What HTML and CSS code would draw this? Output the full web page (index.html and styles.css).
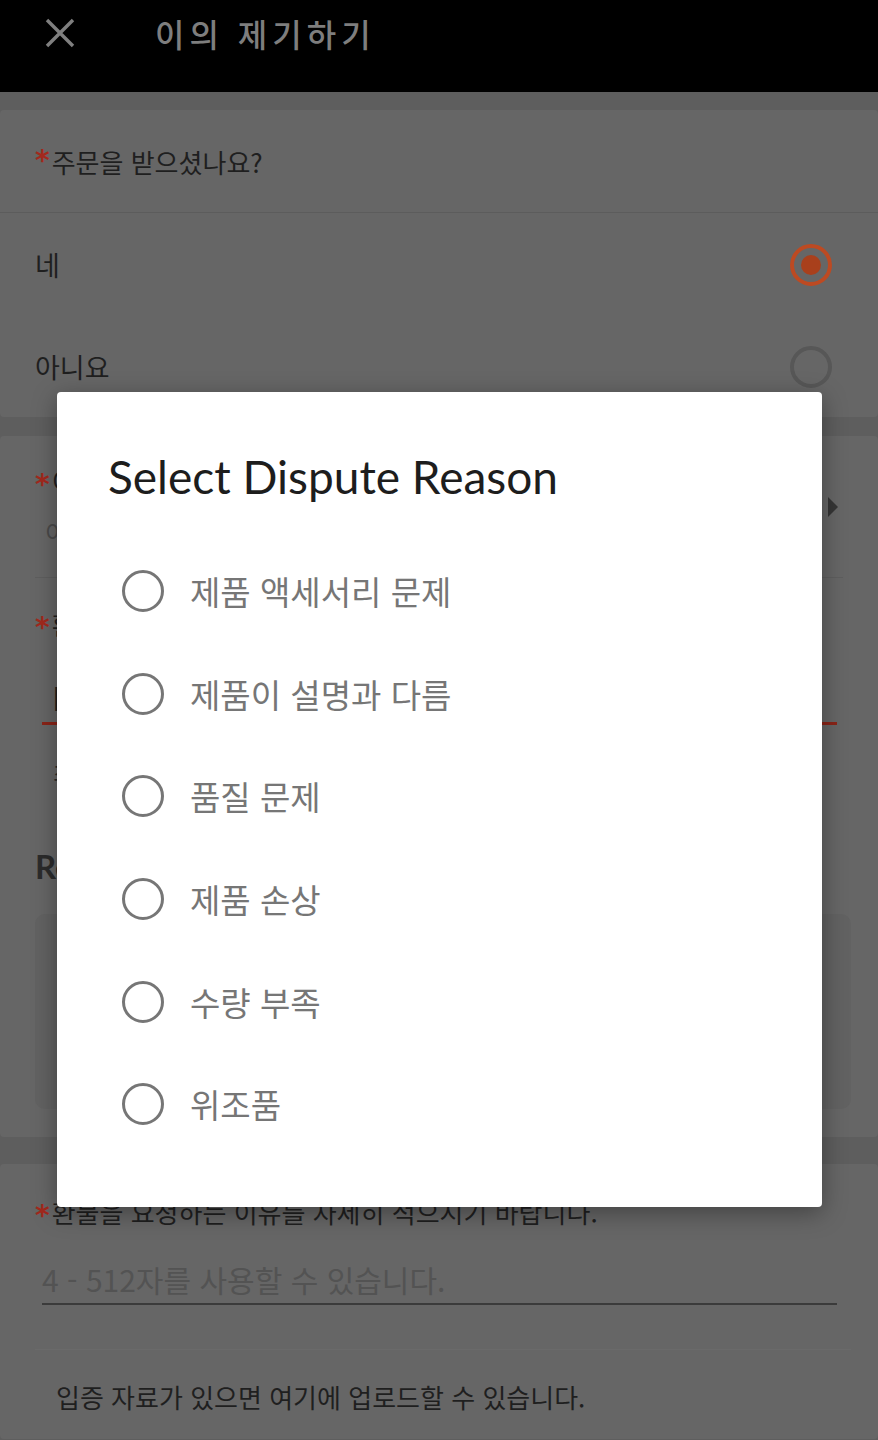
FILE: index.html
```html
<!DOCTYPE html>
<html lang="ko">
<head>
<meta charset="utf-8">
<title>이의 제기하기</title>
<link rel="stylesheet" href="styles.css">
</head>
<body>
<header class="topbar">
  <svg class="close-icon" width="30" height="30" viewBox="0 0 30 30" aria-hidden="true">
    <path d="M2 2 L28 28 M28 2 L2 28" stroke="#7f7f7f" stroke-width="3.4" stroke-linecap="butt" fill="none"/>
  </svg>
  <h1 class="topbar-title">이의 제기하기</h1>
</header>

<main class="page">
  <section class="card">
    <div class="row row-question"><span class="req">*</span>주문을 받으셨나요?</div>
    <div class="row row-option">
      <span>네</span>
      <span class="bg-radio bg-radio-on"></span>
    </div>
    <div class="row row-option row-last">
      <span>아니요</span>
      <span class="bg-radio"></span>
    </div>
  </section>

  <section class="card card-reason">
    <div class="select-block">
      <div class="select-text">
        <div class="field-label"><span class="req">*</span>이의 제기 사유</div>
        <div class="hint">이유를 선택해 주세요</div>
      </div>
      <span class="caret"></span>
    </div>
    <div class="amount-block">
      <div class="field-label"><span class="req">*</span>환불 금액</div>
      <div class="amount-input">KRW 12,000</div>
      <div class="amount-note">최대 환불 가능 금액: KRW 12,000</div>
    </div>
    <h2 class="section-title">Refund Details</h2>
    <div class="detail-box"></div>
  </section>

  <section class="card card-desc">
    <div class="field-label"><span class="req">*</span>환불을 요청하는 이유를 자세히 적으시기 바랍니다.</div>
    <div class="desc-input">4 - 512자를 사용할 수 있습니다.</div>
    <div class="upload-text">입증 자료가 있으면 여기에 업로드할 수 있습니다.</div>
  </section>
</main>

<div class="dialog" role="dialog" aria-label="Select Dispute Reason">
  <h2 class="dialog-title">Select Dispute Reason</h2>
  <ul class="reason-list">
    <li class="reason"><span class="radio"></span>제품 액세서리 문제</li>
    <li class="reason"><span class="radio"></span>제품이 설명과 다름</li>
    <li class="reason"><span class="radio"></span>품질 문제</li>
    <li class="reason"><span class="radio"></span>제품 손상</li>
    <li class="reason"><span class="radio"></span>수량 부족</li>
    <li class="reason"><span class="radio"></span>위조품</li>
  </ul>
</div>
</body>
</html>
```

FILE: styles.css
```css
* { box-sizing: border-box; }

html, body {
  margin: 0;
  padding: 0;
}

body {
  width: 878px;
  height: 1440px;
  overflow: hidden;
  background: #5e5e5e;
  font-family: "Noto Sans CJK KR", "Noto Sans", sans-serif;
  color: #1f1f1f;
  position: relative;
}

/* ---------- top bar ---------- */
.topbar {
  height: 92px;
  background: #000;
  display: flex;
  align-items: center;
  padding: 0 0 26px 45px;
}

.close-icon {
  display: block;
  flex: none;
}

.topbar-title {
  margin: 0 0 0 80px;
  font-size: 32px;
  line-height: 32px;
  font-weight: 500;
  letter-spacing: 5px;
  color: #7e7e7e;
}

/* ---------- page behind the dialog ---------- */
.page {
  display: flex;
  flex-direction: column;
  padding-top: 18px;
}

.card {
  background: #666;
  border-radius: 4px;
  overflow: hidden;
}

.card + .card {
  margin-top: 19px;
}

.req {
  display: inline-block;
  color: #a2291d;
  font-family: "DejaVu Sans", sans-serif;
  font-weight: 700;
  font-size: 28px;
  line-height: 20px;
  margin-right: 2px;
  vertical-align: -2px;
}

.row {
  display: flex;
  align-items: center;
  padding: 0 46px 0 35px;
  font-size: 27px;
}

.row-question {
  height: 103px;
  font-size: 26px;
  border-bottom: 1px solid #5c5c5c;
}

.row-option {
  height: 103px;
  justify-content: space-between;
}

.row-last {
  height: 101px;
}

.bg-radio {
  width: 42px;
  height: 42px;
  border-radius: 50%;
  border: 4px solid #575757;
  display: flex;
  align-items: center;
  justify-content: center;
}

.bg-radio-on {
  border-color: #bd4a22;
}

.bg-radio-on::after {
  content: "";
  width: 20px;
  height: 20px;
  border-radius: 50%;
  background: #a9401c;
}

/* card 2 */
.card-reason {
  padding: 0 35px 25px 35px;
  height: 701px;
}

.select-block {
  display: flex;
  align-items: center;
  justify-content: space-between;
  height: 142px;
  border-bottom: 1px solid #5e5e5e;
  padding-right: 5px;
}

.field-label {
  font-size: 26px;
  line-height: 30px;
}

.hint {
  margin-top: 21px;
  padding-left: 10px;
  font-size: 24px;
  line-height: 30px;
  color: #4a4a4a;
}

.caret {
  width: 0;
  height: 0;
  border-top: 10px solid transparent;
  border-bottom: 10px solid transparent;
  border-left: 10px solid #353535;
}

.amount-block {
  padding-top: 31px;
}

.amount-input {
  margin: 38px 6px 0 7px;
  padding: 0 10px 5px 10px;
  font-size: 32px;
  line-height: 40px;
  color: #1f1f1f;
  border-bottom: 3px solid #8a2418;
}

.amount-note {
  margin-top: 33px;
  padding-left: 18px;
  font-size: 24px;
  line-height: 30px;
  color: #2a2a2a;
}

.section-title {
  margin: 58px 0 0 0;
  font-family: "Lato", "Liberation Sans", sans-serif;
  font-size: 33px;
  line-height: 40px;
  font-weight: 700;
  color: #2b2b2b;
}

.detail-box {
  margin-top: 28px;
  height: 195px;
  background: #626262;
  border-radius: 10px;
  margin-right: -8px;
}

/* card 3 */
.card-desc {
  margin-top: 27px !important;
  padding: 33px 35px 0 35px;
  height: 275px;
}

.desc-input {
  margin: 32px 6px 0 7px;
  font-size: 30px;
  line-height: 40px;
  color: #535353;
  border-bottom: 2px solid #3b3b3b;
  padding-bottom: 4px;
}

.upload-text {
  margin-top: 44px;
  margin-right: -8px;
  border-top: 1px solid #6a6a6a;
  padding: 32px 0 0 21px;
  font-size: 26px;
  line-height: 30px;
  color: #1f1f1f;
}

/* ---------- dialog ---------- */
.dialog {
  position: absolute;
  left: 57px;
  top: 392px;
  width: 765px;
  height: 815px;
  background: #fff;
  border-radius: 4px;
  box-shadow: 0 6px 24px rgba(0, 0, 0, 0.35);
  padding: 57px 0 0 0;
}

.dialog-title {
  margin: 0;
  padding-left: 51px;
  font-family: "Lato", "Liberation Sans", sans-serif;
  font-size: 46px;
  line-height: 56px;
  font-weight: 400;
  color: #1d1d1d;
}

.reason-list {
  list-style: none;
  margin: 35px 0 0 0;
  padding: 0 0 0 65px;
}

.reason {
  display: flex;
  align-items: center;
  height: 102.6px;
  font-size: 33px;
  color: #767676;
}

.radio {
  width: 42px;
  height: 42px;
  border-radius: 50%;
  border: 3.5px solid #767676;
  margin-right: 26px;
  flex: none;
}
```
